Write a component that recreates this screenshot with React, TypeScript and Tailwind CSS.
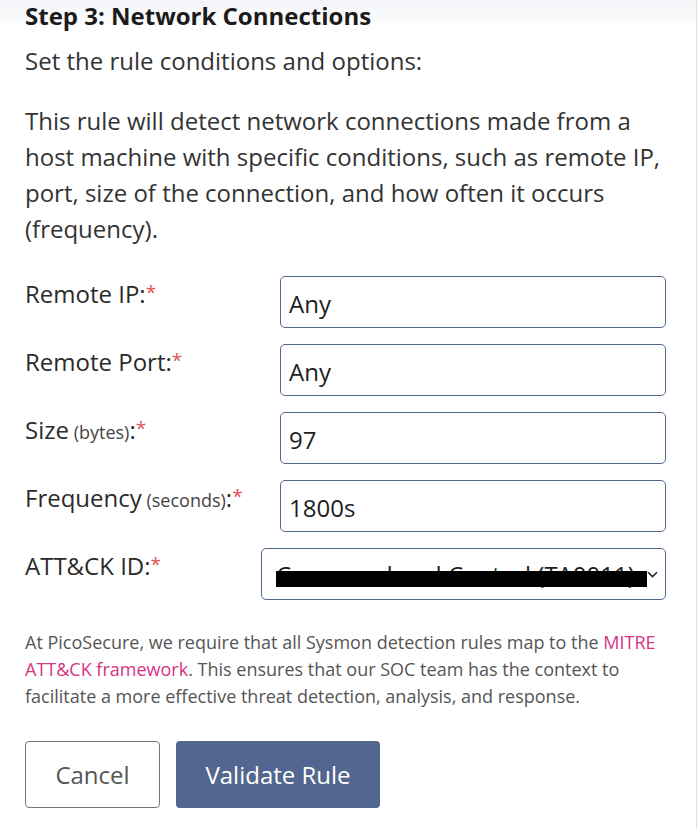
import React from "react";

const font = { fontFamily: '"Open Sans", "Noto Sans", sans-serif' };

function Label({ main, sub }: { main: string; sub?: string }) {
  return (
    <span className="text-[24px] leading-[32px] text-[#2b2b2b]">
      {main}
      {sub && <span className="text-[18px] text-[#444]"> ({sub})</span>}
      :<sup className="text-[19px] text-[#e0524f] relative top-[-4px]">*</sup>
    </span>
  );
}

function Row({ main, sub, value }: { main: string; sub?: string; value: string }) {
  return (
    <div className="flex items-start">
      <div className="w-[255px] shrink-0 pt-[2px]">
        <Label main={main} sub={sub} />
      </div>
      <div className="flex-1 h-[52px] border border-[#54688f] rounded-[5px] flex items-center pl-[8px] pt-[3px] text-[24px] leading-[32px] text-[#1e1e1e]">
        {value}
      </div>
    </div>
  );
}

export default function App() {
  return (
    <div
      style={font}
      className="w-[697px] h-[829px] bg-gradient-to-b from-[#f2f4f7] to-white to-[30px] border-r border-[#dfe4ee] overflow-hidden"
    >
      <div className="pl-[25px] pr-[30px]">
        <h2 className="text-[24px] leading-[32px] font-bold text-[#1b1b1b]">
          Step 3: Network Connections
        </h2>
        <p className="mt-[13px] text-[24px] leading-[32px] text-[#333]">
          Set the rule conditions and options:
        </p>
        <p className="mt-[26px] text-[24px] leading-[36px] text-[#333]">
          This rule will detect network connections made from a host machine with specific
          conditions, such as remote IP, port, size of the connection, and how often it occurs
          (frequency).
        </p>
        <div className="mt-[29px] flex flex-col gap-[16px]">
          <Row main="Remote IP" value="Any" />
          <Row main="Remote Port" value="Any" />
          <Row main="Size" sub="bytes" value="97" />
          <Row main="Frequency" sub="seconds" value="1800s" />
          <div className="flex items-start">
            <div className="w-[236px] shrink-0 pt-[2px]">
              <Label main="ATT&CK ID" />
            </div>
            <div className="relative flex-1 h-[52px] border border-[#54688f] rounded-[5px] flex items-center pl-[14px] pr-[7px] text-[24px] leading-[32px] text-[#1e1e1e]">
              <span className="flex-1 whitespace-nowrap overflow-hidden pt-[1px]">
                Command and Control (TA0011)
              </span>
              <svg width="11" height="7" viewBox="0 0 11 7" className="shrink-0">
                <path d="M1 1.2 L5.5 5.6 L10 1.2" fill="none" stroke="#222" strokeWidth="1.5" />
              </svg>
              <div className="absolute left-[14px] top-[22px] w-[371px] h-[16px] bg-black" />
            </div>
          </div>
        </div>
        <p className="mt-[29px] text-[18px] leading-[27px] text-[#555]">
          At PicoSecure, we require that all Sysmon detection rules map to the{" "}
          <span className="text-[#d63384]">MITRE ATT&amp;CK framework</span>. This ensures that
          our SOC team has the context to facilitate a more effective threat detection, analysis,
          and response.
        </p>
        <div className="mt-[31px] flex gap-[16px]">
          <button className="w-[135px] h-[67px] border border-[#777] rounded-[4px] text-[24px] text-[#555] bg-white">
            Cancel
          </button>
          <button className="w-[204px] h-[67px] rounded-[4px] text-[24px] text-white bg-[#52668f]">
            Validate Rule
          </button>
        </div>
      </div>
    </div>
  );
}
